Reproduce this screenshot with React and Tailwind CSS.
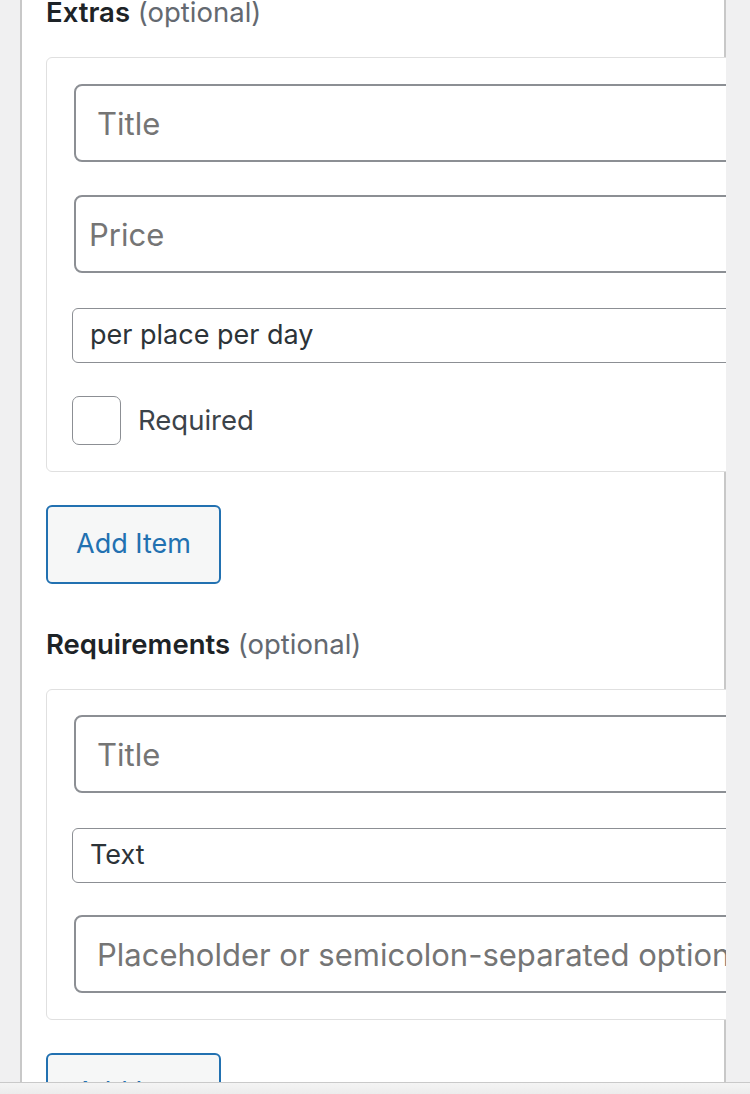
import React from "react";

const inputBase =
  "block h-[78px] w-full rounded-[8px] border-2 border-[#8c8f94] bg-white text-[31px] text-[#2c3338] placeholder:text-[#757575] outline-none";

const selectBase =
  "flex h-[55px] -ml-[2px] items-center rounded-[6px] border-[1.5px] border-[#8c8f94] bg-white px-[17px] text-[27px] text-[#2c3338]";

function SectionHeading({ title }) {
  return (
    <h3 className="text-[27.5px] leading-[32px] text-[#1d2327]">
      <span className="font-semibold">{title}</span>{" "}
      <span className="font-normal text-[#646970]">(optional)</span>
    </h3>
  );
}

function AddItemButton() {
  return (
    <button
      type="button"
      className="mt-[33px] flex h-[79px] w-[175px] items-center justify-center rounded-[6px] border-2 border-[#2271b1] bg-[#f6f7f7] text-[27px] text-[#2271b1]"
    >
      Add Item
    </button>
  );
}

export default function App() {
  return (
    <div className="relative h-[1094px] overflow-hidden bg-[#f0f0f1] font-['Inter',sans-serif]">
      <div className="w-[726px] overflow-hidden">
        <div className="ml-[20px] h-[1200px] border-x-2 border-[#c8c8c8] bg-white pl-[24px]">
          <div className="-mt-[4px]">
            <SectionHeading title="Extras" />
          </div>

          <div className="mt-[29px] w-[720px] rounded-[6px] border border-[#e0e0e0] bg-white pb-[26px] pl-[27px] pt-[26px]">
            <input className={`${inputBase} px-[21px]`} placeholder="Title" />
            <input className={`${inputBase} mt-[33px] px-[13px]`} placeholder="Price" />
            <div className={`${selectBase} mt-[35px]`}>per place per day</div>
            <label className="mt-[33px] flex items-center gap-[17px] -ml-[2px]">
              <span className="h-[49px] w-[49px] rounded-[7px] border-[1.5px] border-[#8c8f94] bg-white" />
              <span className="text-[27.5px] text-[#3c434a]">Required</span>
            </label>
          </div>

          <AddItemButton />

          <div className="mt-[44px]">
            <SectionHeading title="Requirements" />
          </div>

          <div className="mt-[29px] w-[720px] rounded-[6px] border border-[#e0e0e0] bg-white pb-[26px] pl-[27px] pt-[25px]">
            <input className={`${inputBase} px-[21px]`} placeholder="Title" />
            <div className={`${selectBase} mt-[35px]`}>Text</div>
            <input
              className={`${inputBase} mt-[32px] px-[21px] text-[30.5px]`}
              placeholder="Placeholder or semicolon-separated options"
            />
          </div>

          <AddItemButton />
        </div>
      </div>

      <div className="absolute bottom-0 left-0 h-[12px] w-full border-t border-[#c9c9c9] bg-gradient-to-b from-[#f4f4f4] to-[#ececec]" />
    </div>
  );
}
